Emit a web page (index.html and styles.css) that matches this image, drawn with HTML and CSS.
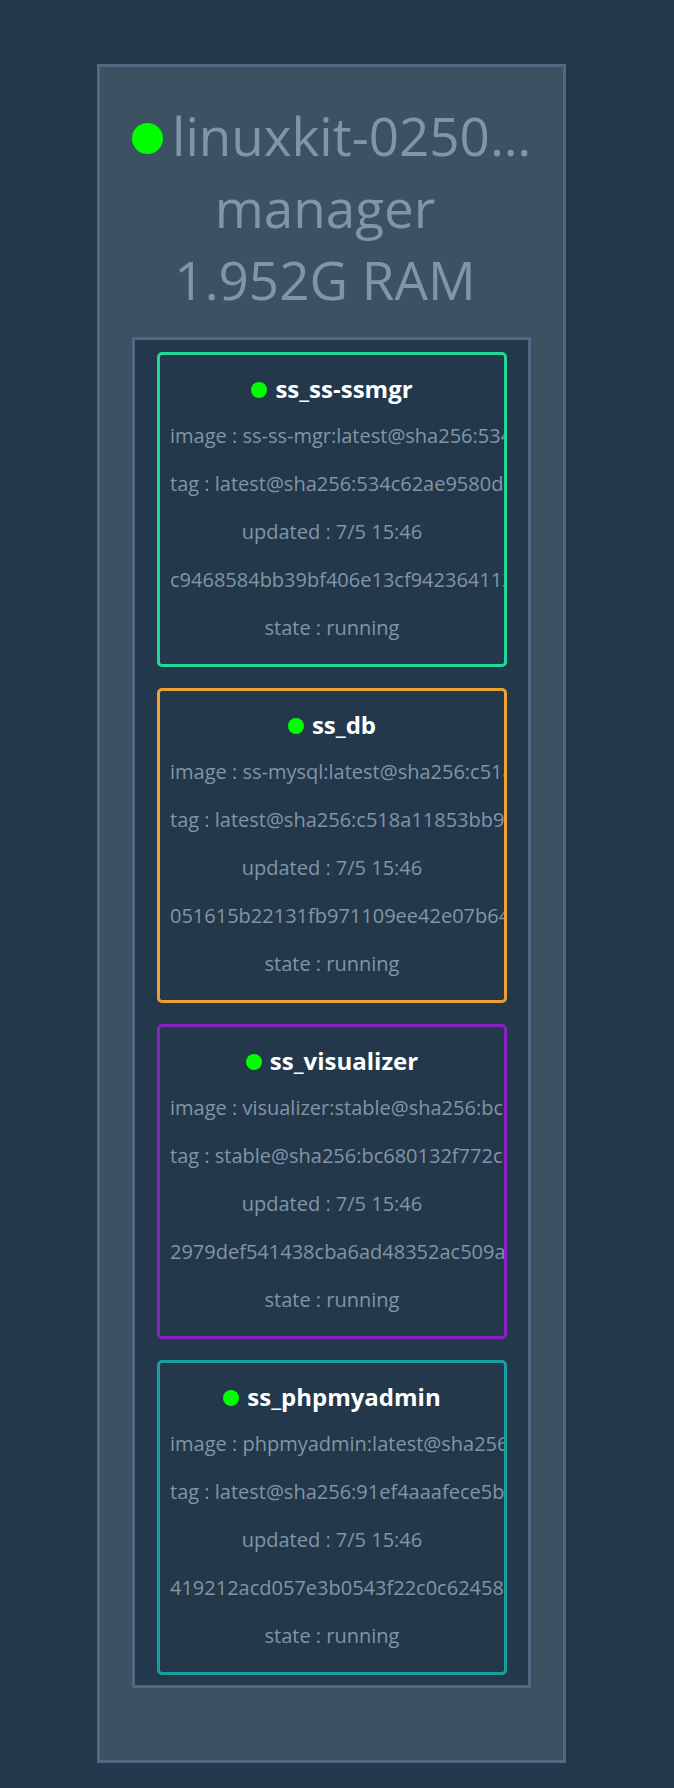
FILE: index.html
```html
<!DOCTYPE html>
<html>
<head>
<meta charset="utf-8">
<link rel="stylesheet" href="styles.css">
</head>
<body>
<div class="node">
  <div class="node-header">
    <div class="node-name"><span class="node-dot"></span>linuxkit-025000000001</div>
    <div class="node-line">manager</div>
    <div class="node-line">1.952G RAM</div>
  </div>
  <div class="containers">
    <div class="card card-green">
      <div class="card-title"><span class="dot"></span>ss_ss-ssmgr</div>
      <div class="row">image : ss-ss-mgr:latest@sha256:534c62ae9580d4e1b2</div>
      <div class="row">tag : latest@sha256:534c62ae9580d4e1b2f3a8</div>
      <div class="row">updated : 7/5 15:46</div>
      <div class="row">c9468584bb39bf406e13cf94236411328a</div>
      <div class="row">state : running</div>
    </div>
    <div class="card card-orange">
      <div class="card-title"><span class="dot"></span>ss_db</div>
      <div class="row">image : ss-mysql:latest@sha256:c518a11853bb9c0d</div>
      <div class="row">tag : latest@sha256:c518a11853bb9c0d7e21</div>
      <div class="row">updated : 7/5 15:46</div>
      <div class="row">051615b22131fb971109ee42e07b64c1d</div>
      <div class="row">state : running</div>
    </div>
    <div class="card card-purple">
      <div class="card-title"><span class="dot"></span>ss_visualizer</div>
      <div class="row">image : visualizer:stable@sha256:bc680132f772cb</div>
      <div class="row">tag : stable@sha256:bc680132f772cb4e51d</div>
      <div class="row">updated : 7/5 15:46</div>
      <div class="row">2979def541438cba6ad48352ac509a2f1</div>
      <div class="row">state : running</div>
    </div>
    <div class="card card-teal">
      <div class="card-title"><span class="dot"></span>ss_phpmyadmin</div>
      <div class="row">image : phpmyadmin:latest@sha256:91ef4aaafece5b</div>
      <div class="row">tag : latest@sha256:91ef4aaafece5bc2d81</div>
      <div class="row">updated : 7/5 15:46</div>
      <div class="row">419212acd057e3b0543f22c0c62458a7e</div>
      <div class="row">state : running</div>
    </div>
  </div>
</div>
</body>
</html>
```

FILE: styles.css
```css
html, body {
  margin: 0;
  padding: 0;
  background: #23384b;
}

body {
  font-family: "Open Sans", "DejaVu Sans", sans-serif;
  color: #8096a5;
  padding-top: 64px;
  height: 1724px;
}

.node {
  margin-left: 97px;
  width: 463px;
  background: #3c5263;
  border: 3px solid #4e6a83;
  padding: 33px 0 72px;
}

.node-header {
  margin: 0 32px;
  font-size: 53px;
  line-height: 72px;
}

.node-name {
  white-space: nowrap;
  overflow: hidden;
  text-overflow: ellipsis;
  text-align: left;
  margin-right: -12px;
}

.node-dot {
  display: inline-block;
  width: 31px;
  height: 31px;
  border-radius: 50%;
  background: #00ff00;
  margin-right: 9px;
  vertical-align: 2px;
}

.node-line {
  text-align: center;
  padding-right: 13px;
}

.containers {
  margin: 21px 32px 0;
  background: #23384b;
  border: 3px solid #4e6a83;
  padding: 12px 21px 10px 22px;
  display: flex;
  flex-direction: column;
  gap: 21px;
}

.card {
  border: 3px solid #20d89a;
  border-radius: 5px;
  padding: 10px 10px 12px;
  overflow: hidden;
  text-align: center;
}

.card-green { border-color: #20d89a; }
.card-orange { border-color: #f0a033; }
.card-purple { border-color: #8a1fc6; }
.card-teal { border-color: #18a0a0; }

.card-title {
  font-size: 24px;
  font-weight: 700;
  line-height: 47px;
  color: #ffffff;
  white-space: nowrap;
}

.dot {
  display: inline-block;
  width: 16px;
  height: 16px;
  border-radius: 50%;
  background: #00ff00;
  margin-right: 8px;
  vertical-align: 0px;
}

.row {
  font-size: 20px;
  line-height: 48px;
  white-space: nowrap;
}
```
